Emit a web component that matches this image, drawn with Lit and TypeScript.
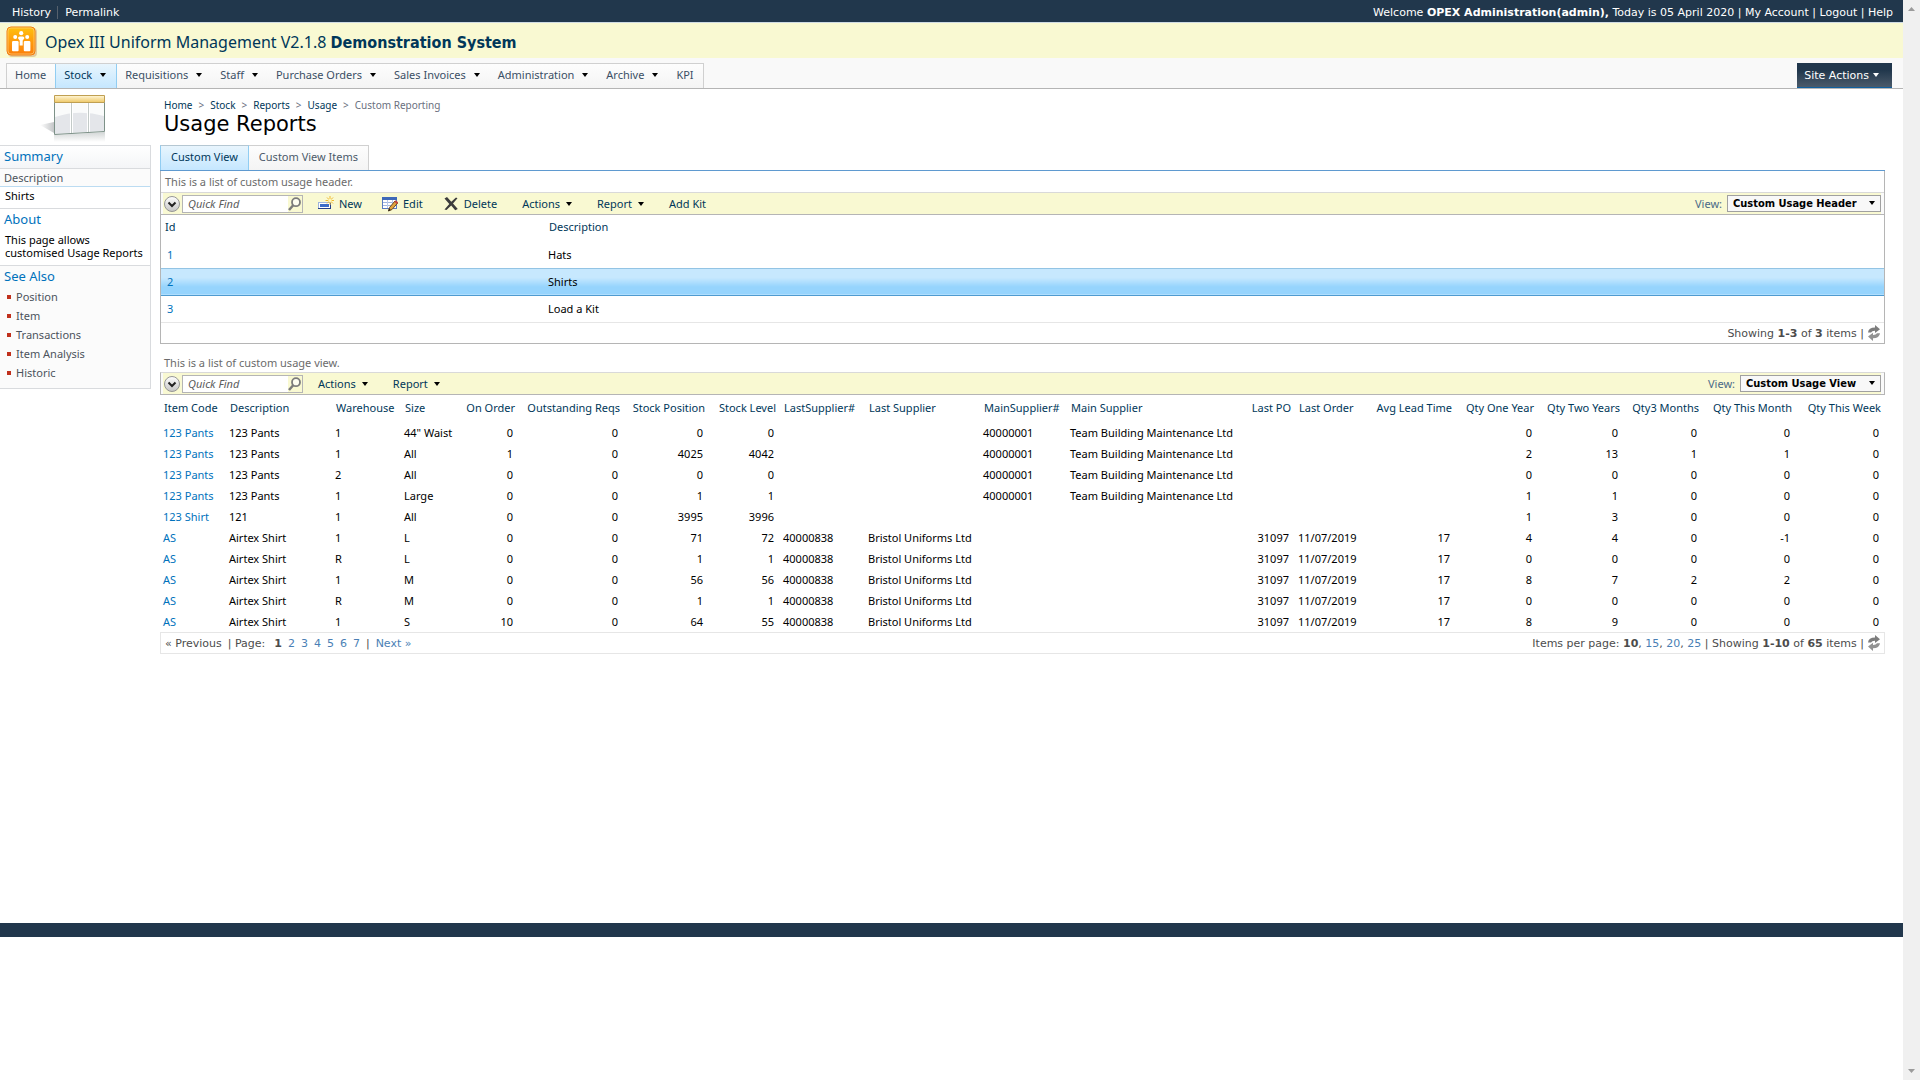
import { LitElement, html, svg, css, nothing } from "lit";
import { customElement } from "lit/decorators.js";
import { classMap } from "lit/directives/class-map.js";

interface Column {
  label: string;
  width: number;
  numeric?: boolean;
}

const MENU = [
  { label: "Home" },
  { label: "Stock", menu: true, active: true },
  { label: "Requisitions", menu: true },
  { label: "Staff", menu: true },
  { label: "Purchase Orders", menu: true },
  { label: "Sales Invoices", menu: true },
  { label: "Administration", menu: true },
  { label: "Archive", menu: true },
  { label: "KPI" },
];

const TRAIL = ["Home", "Stock", "Reports", "Usage"];
const SEE_ALSO = ["Position", "Item", "Transactions", "Item Analysis", "Historic"];

const HEADERS = [
  { id: "1", description: "Hats" },
  { id: "2", description: "Shirts", selected: true },
  { id: "3", description: "Load a Kit" },
];

const COLUMNS: Column[] = [
  { label: "Item Code", width: 66 },
  { label: "Description", width: 106 },
  { label: "Warehouse", width: 69 },
  { label: "Size", width: 59 },
  { label: "On Order", width: 59, numeric: true },
  { label: "Outstanding Reqs", width: 105, numeric: true },
  { label: "Stock Position", width: 85, numeric: true },
  { label: "Stock Level", width: 71, numeric: true },
  { label: "LastSupplier#", width: 85 },
  { label: "Last Supplier", width: 115 },
  { label: "MainSupplier#", width: 87 },
  { label: "Main Supplier", width: 179 },
  { label: "Last PO", width: 49, numeric: true },
  { label: "Last Order", width: 74 },
  { label: "Avg Lead Time", width: 87, numeric: true },
  { label: "Qty One Year", width: 82, numeric: true },
  { label: "Qty Two Years", width: 86, numeric: true },
  { label: "Qty3 Months", width: 79, numeric: true },
  { label: "Qty This Month", width: 93, numeric: true },
  { label: "Qty This Week", width: 89, numeric: true },
];

const TEAM = ["", "", "40000001", "Team Building Maintenance Ltd", "", "", ""];
const NONE = ["", "", "", "", "", "", ""];
const BRISTOL = ["40000838", "Bristol Uniforms Ltd", "", "", "31097", "11/07/2019", "17"];

const ROWS: string[][] = [
  ["123 Pants", "123 Pants", "1", '44" Waist', "0", "0", "0", "0", ...TEAM, "0", "0", "0", "0", "0"],
  ["123 Pants", "123 Pants", "1", "All", "1", "0", "4025", "4042", ...TEAM, "2", "13", "1", "1", "0"],
  ["123 Pants", "123 Pants", "2", "All", "0", "0", "0", "0", ...TEAM, "0", "0", "0", "0", "0"],
  ["123 Pants", "123 Pants", "1", "Large", "0", "0", "1", "1", ...TEAM, "1", "1", "0", "0", "0"],
  ["123 Shirt", "121", "1", "All", "0", "0", "3995", "3996", ...NONE, "1", "3", "0", "0", "0"],
  ["AS", "Airtex Shirt", "1", "L", "0", "0", "71", "72", ...BRISTOL, "4", "4", "0", "-1", "0"],
  ["AS", "Airtex Shirt", "R", "L", "0", "0", "1", "1", ...BRISTOL, "0", "0", "0", "0", "0"],
  ["AS", "Airtex Shirt", "1", "M", "0", "0", "56", "56", ...BRISTOL, "8", "7", "2", "2", "0"],
  ["AS", "Airtex Shirt", "R", "M", "0", "0", "1", "1", ...BRISTOL, "0", "0", "0", "0", "0"],
  ["AS", "Airtex Shirt", "1", "S", "10", "0", "64", "55", ...BRISTOL, "8", "9", "0", "0", "0"],
];

const caret = html`<svg class="caret" width="6" height="4" viewBox="0 0 6 4" aria-hidden="true">
  <path d="M0 0h6L3 4z" fill="currentColor" />
</svg>`;

const logo = html`<svg class="logo" width="32" height="32" viewBox="0 0 32 32" aria-hidden="true">
  <defs>
    <linearGradient id="lg" x1="0" y1="0" x2="0" y2="1">
      <stop offset="0" stop-color="#ffc20e" />
      <stop offset="0.5" stop-color="#ff9c0c" />
      <stop offset="1" stop-color="#fb7d0b" />
    </linearGradient>
  </defs>
  <rect x="2" y="2" width="29" height="29" rx="4" fill="#d8b98a" opacity="0.7" />
  <rect x="1" y="1" width="28" height="28" rx="4" fill="url(#lg)" stroke="#f07c12" />
  <rect x="2" y="2" width="26" height="26" rx="3" fill="none" stroke="#ffd27a" opacity="0.7" />
  <g fill="#fff">
    <circle cx="15.2" cy="7.2" r="2.1" />
    <circle cx="9.2" cy="11" r="2" />
    <circle cx="21.2" cy="11" r="2" />
    <path d="M12 12.200q0-1.700 1.600-1.700h3.200q1.600 0 1.600 1.700l-1.700 2.300v5h-3v-5z" />
    <path d="M6 16.200q0-1.200 1.200-1.200h4.200q1.200 0 1.200 1.200v8q0 1-1 1H7q-1 0-1-1z" />
    <path d="M17.800 16.200q0-1.200 1.200-1.200h4.200q1.200 0 1.200 1.200v8q0 1-1 1h-4.600q-1 0-1-1z" />
  </g>
</svg>`;

const sheet = html`<svg class="sheet" width="68" height="50" viewBox="0 0 68 50" aria-hidden="true">
  <defs>
    <linearGradient id="sh" x1="0" y1="0" x2="1" y2="0">
      <stop offset="0" stop-color="#fff" />
      <stop offset="1" stop-color="#c4c6c8" />
    </linearGradient>
    <linearGradient id="go" x1="0" y1="0" x2="0" y2="1">
      <stop offset="0" stop-color="#fff6d8" />
      <stop offset="1" stop-color="#eec765" />
    </linearGradient>
    <linearGradient id="rf" x1="0" y1="0" x2="0" y2="1">
      <stop offset="0" stop-color="#d2d6d6" />
      <stop offset="1" stop-color="#fff" />
    </linearGradient>
  </defs>
  <path d="M1 32l14-3v11z" fill="url(#sh)" />
  <path d="M15 42l51-3v10H15z" fill="url(#rf)" />
  <path d="M15 8h51v31l-51 3z" fill="#fafbfb" />
  <path d="M16 24q24-8 49-1v15l-49 3z" fill="#e4e6ea" />
  <path d="M32.500 8v33M49.500 8v32" stroke="#fff" stroke-width="3" />
  <path d="M32.500 8v33M49.500 8v32" stroke="#c3cac8" stroke-width="1" />
  <path d="M15.500 2.500h50v7h-50z" fill="url(#go)" stroke="#bf9f52" />
  <path d="M15.500 9.500v32l50-3V9.500" fill="none" stroke="#7d9188" />
</svg>`;

const chevron = html`<svg width="16" height="16" viewBox="0 0 16 16" aria-hidden="true">
  <defs>
    <linearGradient id="cv" x1="0" y1="0" x2="0" y2="1">
      <stop offset="0" stop-color="#fff" />
      <stop offset="1" stop-color="#c4c4c4" />
    </linearGradient>
  </defs>
  <circle cx="8" cy="8" r="7.500" fill="url(#cv)" stroke="#969696" />
  <path d="M4.500 6.500L8 10l3.500-3.500" fill="none" stroke="#222" stroke-width="2" />
</svg>`;

const magnifier = html`<svg width="14" height="16" viewBox="0 0 14 16" aria-hidden="true">
  <circle cx="8" cy="6.200" r="4" fill="#fdfdf0" stroke="#7b7b7b" stroke-width="1.800" />
  <path d="M5.200 9.200L1 14" stroke="#7b7b7b" stroke-width="2.500" />
</svg>`;

const newIcon = html`<svg width="16" height="16" viewBox="0 0 16 16" aria-hidden="true">
  <rect x="0.500" y="6.500" width="12" height="6" fill="#fff" stroke="#9fb4dc" />
  <path d="M0 12.500h13M12.500 7v6" stroke="#24408c" />
  <rect x="2" y="8" width="9" height="3" fill="#3c6cc8" />
  <path d="M12 0v9M7.500 4.500h8.500M9 1.500l6 6M15 1.500l-6 6" stroke="#f0b82e" />
  <circle cx="12" cy="4.500" r="1.700" fill="#fff7b8" />
</svg>`;

const editIcon = html`<svg width="16" height="16" viewBox="0 0 16 16" aria-hidden="true">
  <rect x="0.500" y="1.500" width="14" height="11" fill="#fff" stroke="#5a7cc0" />
  <rect x="0" y="1" width="15" height="3" fill="#3f69b8" />
  <path d="M1 6.500h13M1 9.500h13" stroke="#9fb6e0" />
  <path d="M5.500 4v8M10.500 4v8" stroke="#b8c9ea" />
  <path d="M6.500 15l1-3.500L13 5l2.500 2.200L10 13.500z" fill="#e0a33c" stroke="#6b4a22" />
  <path d="M6.200 15.200l.9-2.600 1.700 1.500z" fill="#222" />
  <path d="M13 5l2.500 2.200" stroke="#c3423a" stroke-width="2" />
</svg>`;

const deleteIcon = html`<svg width="16" height="16" viewBox="0 0 16 16" aria-hidden="true">
  <path
    d="M1.500 2.500L4 1l4.300 4.700L13 1.500l1.500.800L10 7.600l4.800 5.400-2.600 1.300-4-4.700L3.500 14l-2-.600L6.300 8z"
    fill="#3c3c3c"
  />
</svg>`;

const refresh = html`<svg width="14" height="16" viewBox="0 0 14 16" aria-hidden="true">
  <path d="M1 7.500Q1.500 2.500 8 2.500V0l5 4.200L8 8V5.800Q5 5.700 4 7.500z" fill="#7d7d7d" />
  <path d="M13 8.300q-.5 5-7 5V16L1 11.600l5-3.800V10q3 .1 4-1.700z" fill="#939393" />
</svg>`;

const arrow = (up: boolean) => svg`<path d=${up ? "M0 4h7L3.500 0z" : "M0 0h7L3.500 4z"} fill="#9b9b9b" />`;

@customElement("app-root")
export class AppRoot extends LitElement {
  static styles = css`
    * { box-sizing: border-box; }
    :host {
      display: flex;
      min-height: 100vh;
      background: #fff;
      color: #000;
      font: 11px/13px "Noto Sans", Verdana, sans-serif;
    }
    a { color: inherit; text-decoration: none; }
    button, input, select { font: inherit; color: inherit; margin: 0; }
    button { background: none; border: 0; padding: 0; cursor: pointer; }
    svg { display: block; flex: none; }
    h1, h2, p, ul { margin: 0; padding: 0; font-weight: 400; }
    .page { flex: 1; min-width: 0; }

    .scrollbar {
      width: 17px;
      height: 100vh;
      position: sticky;
      top: 0;
      flex: none;
      background: #f0f0f0;
      display: flex;
      flex-direction: column;
      justify-content: space-between;
      align-items: center;
      padding: 7px 0;
    }

    .top {
      display: flex;
      justify-content: space-between;
      align-items: center;
      height: 23px;
      padding: 3px 10px 0 12px;
      background: #21374c;
      border-bottom: 1px solid #cfdbe3;
      color: #fff;
      font-family: "DejaVu Sans", Verdana, sans-serif;
    }
    .quick { display: flex; }
    .quick a + a { margin-left: 6px; padding-left: 7px; border-left: 1px solid #56616d; }
    .banner {
      display: flex;
      align-items: center;
      gap: 7px;
      height: 35px;
      padding: 3px 6px 0;
      background: #f9f9d2;
      color: #003759;
      font-size: 16px;
      line-height: 20px;
    }
    .banner b { font-family: "DejaVu Sans Condensed", "DejaVu Sans", sans-serif; }
    .nav {
      display: flex;
      justify-content: space-between;
      align-items: flex-end;
      height: 31px;
      padding: 0 11px 0 6px;
      background: #f9f9f9;
      border-bottom: 1px solid #b5b5b5;
    }
    .menu {
      display: flex;
      height: 25px;
      border: solid #d0d0d0;
      border-width: 1px 1px 0;
      background: linear-gradient(#fdfdfd, #f4f4f4);
      color: #3b4f65;
    }
    .menu a { display: flex; align-items: center; gap: 8px; padding: 0 9px 3px 8px; }
    .menu .caret { color: #000; margin-right: 1px; }
    .menu .active {
      background: linear-gradient(#e8f5fd, #c5e7ff);
      border: solid #91cdf2;
      border-width: 0 1px;
      color: #003759;
    }
    .site {
      display: flex;
      align-items: center;
      gap: 4px;
      height: 25px;
      padding: 0 13px 0 7px;
      border-bottom: 1px solid #0f5f9d;
      background: linear-gradient(#21374c 30%, #4b5a6a);
      color: #fff;
      font-family: "DejaVu Sans", Verdana, sans-serif;
    }

    .body { display: flex; gap: 9px; padding-bottom: 269px; }
    .side { width: 151px; flex: none; }
    .sheet { margin: 4px 0 2px 39px; }
    .panel {
      border: solid #d9dbde;
      border-width: 1px 1px 1px 0;
      background: #fbfbfb;
    }
    .panel h2 { padding: 2px 4px 0; font-size: 13px; line-height: 16px; color: #0072bc; }
    .panel .first { height: 22px; background: linear-gradient(#fff, #f4f5f7); }
    .panel .label { padding: 2px 4px; border-top: 1px solid #d9dbde; border-bottom: 1px solid #bcdcf2; color: #4c535c; }
    .panel .value { padding: 2px 5px 6px; border-bottom: 1px solid #d9dbde; background: #fff; }
    .panel .about { padding: 6px 5px; border-bottom: 1px solid #d9dbde; }
    .panel .open { background: #fff; }
    .links { list-style: none; }
    .panel .links { padding: 3px 0 6px; color: #4c535c; }
    .links li { display: flex; align-items: center; gap: 5px; height: 19px; padding-left: 7px; }
    .links li::before { content: ""; width: 4px; height: 4px; background: #c0301c; }

    .main { flex: 1; min-width: 0; padding: 10px 18px 0 0; }
    .trail { display: flex; gap: 6px; padding-left: 4px; font-size: 10px; color: #6a7080; }
    .trail a { color: #003759; }
    h1 {
      padding: 0 4px;
      font-family: "DejaVu Sans", Verdana, sans-serif;
      font-size: 21px;
      line-height: 24px;
      height: 33px;
    }
    .tabs { display: flex; height: 26px; border-bottom: 1px solid #5f9ad0; }
    .tab {
      border: solid #d0d0d0;
      border-width: 1px 1px 0 0;
      padding: 0 10px 3px;
      background: linear-gradient(#fdfdfd, #f4f4f4);
      color: #4c5a6a;
    }
    .tab.active {
      border-color: #b5c7d2 #91cdf2;
      border-left-width: 1px;
      background: linear-gradient(#e8f5fd, #c5e7ff);
      color: #003759;
    }
    .boxed { border: solid #b5b5b5; border-width: 0 1px 1px; }
    .note { padding: 12px 4px 0; height: 28px; color: #6b6b6b; }
    .boxed .note { padding-top: 4px; height: 21px; }

    .bar {
      display: flex;
      align-items: center;
      height: 23px;
      padding: 0 3px;
      border: solid #d9d9d9;
      border-width: 1px 0;
      border-bottom-color: #b5b5b5;
      background: linear-gradient(to right, #fafafa 2px, #f9f9d2 2px, #f9f9d2 calc(100% - 3px), #fafafa calc(100% - 3px));
      color: #003759;
    }
    .bar.framed { border-width: 1px; border-left-color: #b5b5b5; border-right-color: #b5b5b5; }
    .find {
      display: flex;
      align-items: center;
      width: 121px;
      height: 18px;
      margin: 0 15px 0 2px;
      border: 1px solid #b5b5b5;
      background: #fff;
    }
    .find input { flex: 1; min-width: 0; border: 0; padding: 0 0 0 5px; outline: 0; background: none; font-style: italic; }
    .find input::placeholder { color: #5c5c5c; opacity: 1; }
    .find button { background: #f9f9d2; }
    .act { display: flex; align-items: center; gap: 5px; }
    .act + .act { margin-left: 25px; }
    .act .caret { color: #000; margin-left: 1px; }
    .icons .act + .act { margin-left: 20px; }
    .icons { display: flex; }
    .icons + .act { margin-left: 25px; }
    .view { display: flex; align-items: center; gap: 5px; margin-left: auto; color: #4a6a88; }
    .pick { display: grid; align-items: center; margin-bottom: 1px; }
    .pick select, .pick .caret { grid-area: 1 / 1; }
    .pick .caret { justify-self: end; margin-right: 6px; color: #000; pointer-events: none; }
    .pick select {
      appearance: none;
      height: 17px;
      padding: 0 23px 0 5px;
      border: 1px solid #a0a0a0;
      border-radius: 0;
      background: #f8f8f8;
      color: #000;
      font-family: "DejaVu Sans Condensed", "DejaVu Sans", sans-serif;
      font-weight: 700;
      line-height: 15px;
    }

    table { width: 100%; border-collapse: collapse; table-layout: fixed; }
    th { font-weight: 400; text-align: left; color: #003759; white-space: nowrap; padding: 0 4px 3px; }
    td { padding: 0 4px 0 3px; }
    td a { color: #0072bc; }
    .heads th { height: 26px; }
    .heads td { height: 27px; }
    .heads td:first-child { padding-left: 6px; }
    .heads .selected td {
      background: linear-gradient(#c7e8fe 35%, #96d4fd 70%);
      border-top: 1px solid #93c4e4;
      border-bottom: 1px solid #4f9bd0;
    }
    .usage th { height: 27px; }
    .usage td { height: 21px; white-space: nowrap; }
    .usage .num { text-align: right; }
    .usage td.num { padding-right: 6px; }
    .first-col { width: 384px; }

    .foot {
      display: flex;
      align-items: center;
      height: 21px;
      padding: 0 3px 0 4px;
      border-top: 1px solid #e6e6e6;
      color: #4c4c4c;
      font-family: "DejaVu Sans", Verdana, sans-serif;
    }
    .foot.framed { height: 22px; border: 1px solid #e6e6e6; }
    .foot a { color: #4a7fb5; }
    .pages { display: flex; gap: 6px; }
    .pages b { margin-left: 3px; }
    .sum { display: flex; gap: 3px; align-items: center; margin-left: auto; }
    .base { height: 14px; background: #21374c; }
  `;

  private bar(id: string, view: string, framed: boolean) {
    return html`<div class=${classMap({ bar: true, framed })}>
      <button aria-label="Toggle search">${chevron}</button>
      <div class="find">
        <input id="find-${id}" type="text" placeholder="Quick Find" aria-label="Quick Find" />
        <button aria-label="Search">${magnifier}</button>
      </div>
      ${framed
        ? nothing
        : html`<div class="icons">
            <button class="act">${newIcon}New</button>
            <button class="act">${editIcon}Edit</button>
            <button class="act">${deleteIcon}Delete</button>
          </div>`}
      <button class="act">Actions ${caret}</button>
      <button class="act">Report ${caret}</button>
      ${framed ? nothing : html`<button class="act">Add Kit</button>`}
      <div class="view">
        <label for="view-${id}">View:</label>
        <span class="pick">
          <select id="view-${id}"><option>${view}</option></select>
          ${caret}
        </span>
      </div>
    </div>`;
  }

  render() {
    return html`
      <div class="page">
        <header>
          <div class="top">
            <div class="quick"><a href="#">History</a><a href="#">Permalink</a></div>
            <div>
              Welcome <b>OPEX Administration(admin),</b> Today is 05 April 2020 | <a href="#">My Account</a> |
              <a href="#">Logout</a> | <a href="#">Help</a>
            </div>
          </div>
          <div class="banner">${logo}<div>Opex III Uniform Management V2.1.8 <b>Demonstration System</b></div></div>
          <nav class="nav">
            <div class="menu">
              ${MENU.map(
                (m) => html`<a href="#" class=${classMap({ active: !!m.active })}>${m.label}${m.menu ? caret : nothing}</a>`
              )}
            </div>
            <button class="site">Site Actions ${caret}</button>
          </nav>
        </header>
        <div class="body">
          <aside class="side">
            ${sheet}
            <div class="panel">
              <h2 class="first">Summary</h2>
              <p class="label">Description</p>
              <p class="value">Shirts</p>
              <div class="open">
                <h2>About</h2>
                <p class="about">This page allows<br />customised Usage Reports</p>
              </div>
              <h2>See Also</h2>
              <ul class="links">
                ${SEE_ALSO.map((s) => html`<li><a href="#">${s}</a></li>`)}
              </ul>
            </div>
          </aside>
          <main class="main">
            <nav class="trail">${TRAIL.map((t) => html`<a href="#">${t}</a><span>&gt;</span>`)}<span>Custom Reporting</span></nav>
            <h1>Usage Reports</h1>
            <div class="tabs">
              <button class="tab active">Custom View</button>
              <button class="tab">Custom View Items</button>
            </div>
            <section class="boxed">
              <p class="note">This is a list of custom usage header.</p>
              ${this.bar("header", "Custom Usage Header", false)}
              <table class="heads">
                <colgroup><col class="first-col" /><col /></colgroup>
                <thead><tr><th>Id</th><th>Description</th></tr></thead>
                <tbody>
                  ${HEADERS.map(
                    (h) => html`<tr class=${classMap({ selected: !!h.selected })}>
                      <td><a href="#">${h.id}</a></td>
                      <td>${h.description}</td>
                    </tr>`
                  )}
                </tbody>
              </table>
              <div class="foot">
                <div class="sum">
                  <span>Showing <b>1-3</b> of <b>3</b> items |</span>
                  <button aria-label="Refresh">${refresh}</button>
                </div>
              </div>
            </section>
            <p class="note">This is a list of custom usage view.</p>
            <section>
              ${this.bar("usage", "Custom Usage View", true)}
              <table class="usage">
                <colgroup>${COLUMNS.map((c) => html`<col style="width:${c.width}px" />`)}</colgroup>
                <thead>
                  <tr>${COLUMNS.map((c) => html`<th class=${classMap({ num: !!c.numeric })}>${c.label}</th>`)}</tr>
                </thead>
                <tbody>
                  ${ROWS.map(
                    (r) => html`<tr>
                      ${r.map(
                        (v, i) => html`<td class=${classMap({ num: !!COLUMNS[i].numeric })}>${i ? v : html`<a href="#">${v}</a>`}</td>`
                      )}
                    </tr>`
                  )}
                </tbody>
              </table>
              <div class="foot framed">
                <div class="pages">
                  <span>« Previous</span><span>| Page:</span><b>1</b>
                  ${[2, 3, 4, 5, 6, 7].map((n) => html`<a href="#">${n}</a>`)}
                  <span>|</span><a href="#">Next »</a>
                </div>
                <div class="sum">
                  <span>
                    Items per page: <b>10</b>, <a href="#">15</a>, <a href="#">20</a>, <a href="#">25</a> | Showing
                    <b>1-10</b> of <b>65</b> items |
                  </span>
                  <button aria-label="Refresh">${refresh}</button>
                </div>
              </div>
            </section>
          </main>
        </div>
        <footer class="base"></footer>
      </div>
      <div class="scrollbar" aria-hidden="true">
        <svg width="7" height="4" viewBox="0 0 7 4">${arrow(true)}</svg>
        <svg width="7" height="4" viewBox="0 0 7 4">${arrow(false)}</svg>
      </div>
    `;
  }
}
